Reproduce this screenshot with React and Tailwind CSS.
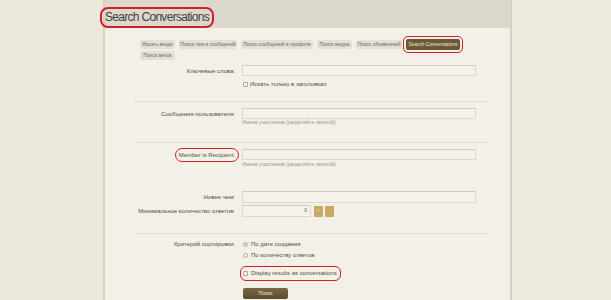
const tabs = [
  { label: "Искать везде", w: "w-[35px]" },
  { label: "Поиск тем и сообщений", w: "w-[58px]" },
  { label: "Поиск сообщений в профиле", w: "w-[72px]" },
  { label: "Поиск медиа", w: "w-[35px]" },
  { label: "Поиск объявлений", w: "w-[46px]" },
  { label: "Search Conversations", w: "w-[54px]", active: true },
  { label: "Поиск меток", w: "w-[35px]" },
];

function Label({ children }) {
  return (
    <div className="w-[130px] shrink-0 text-right text-[6px] leading-[8px] text-[#4d4d4d]">
      {children}
    </div>
  );
}

function Input({ className = "w-[234px] h-[11px]" }) {
  return (
    <div
      className={`${className} border border-[#dcd8cc] border-t-[#cfcbbf] bg-[#f4f2ea]`}
    />
  );
}

function Hint({ children }) {
  return (
    <div className="ml-[137px] text-[5px] leading-[7px] text-[#9a978e]">
      {children}
    </div>
  );
}

function Sep({ className }) {
  return <div className={`ml-[30px] w-[353px] h-px bg-[#e2ded2] ${className}`} />;
}

function Box({ round }) {
  return (
    <span
      className={`inline-block w-[5px] h-[5px] border border-[#a8a59c] bg-[#f8f7f2] ${
        round ? "rounded-full" : "rounded-[1px]"
      }`}
    />
  );
}

export default function App() {
  return (
    <div
      className="flex w-full h-[300px] overflow-hidden bg-[#ebe8dd]"
      style={{ fontFamily: '"Liberation Sans", Arial, sans-serif' }}
    >
      <div className="w-[103px] shrink-0" />

      <div className="w-[409px] shrink-0 flex flex-col border-x-2 border-[#d5d1c5]">
        <div className="h-[28px] shrink-0 bg-[#dcd8cc] flex items-end pb-[2px]">
          <span className="-ml-[3px] px-[3px] text-[12px] leading-[17px] tracking-[-0.7px] text-[#3f3f3f] rounded-[6px] outline-2 outline-[#d11f2b]">
            Search Conversations
          </span>
        </div>

        <div className="flex-1 bg-[#f3f1e7] rounded-tl-[4px] rounded-tr-[4px] flex flex-col">
          {/* tabs */}
          <div className="ml-[35px] mt-[11px] w-[330px] flex flex-wrap items-center gap-x-[4px] gap-y-[1px]">
            {tabs.map((t) =>
              t.active ? (
                <div
                  key={t.label}
                  className={`${t.w} h-[11px] flex items-center justify-center rounded-[2px] bg-[#6a5837] text-[5px] text-[#f1e8cf] outline-[1.5px] outline-offset-[2px] outline-[#d11f2b]`}
                >
                  {t.label}
                </div>
              ) : (
                <div
                  key={t.label}
                  className={`${t.w} h-[9px] flex items-center justify-center rounded-[2px] bg-[#e4e0d4] text-[5px] text-[#6a6a6a]`}
                >
                  {t.label}
                </div>
              )
            )}
          </div>

          {/* keywords */}
          <div className="mt-[5px] flex items-center">
            <Label>Ключевые слова:</Label>
            <div className="ml-[7px]">
              <Input />
            </div>
          </div>
          <div className="mt-[4px] ml-[138px] h-[8px] flex items-center gap-[2px] text-[6px] text-[#4d4d4d]">
            <Box />
            <span>Искать только в заголовках</span>
          </div>

          <Sep className="mt-[13px]" />

          {/* user messages */}
          <div className="mt-[6px] flex items-center">
            <Label>Сообщения пользователя:</Label>
            <div className="ml-[7px]">
              <Input />
            </div>
          </div>
          <Hint>Имена участников (разделяйте запятой).</Hint>

          <Sep className="mt-[16px]" />

          {/* recipient */}
          <div className="mt-[6px] flex items-center">
            <Label>
              <span className="rounded-[3px] outline-[1.5px] outline-offset-[3px] outline-[#d11f2b]">
                Member is Recipient:
              </span>
            </Label>
            <div className="ml-[7px]">
              <Input />
            </div>
          </div>
          <Hint>
            <span className="block mt-px">Имена участников (разделяйте запятой).</span>
          </Hint>

          {/* newer than */}
          <div className="mt-[23px] flex items-center">
            <Label>Новее чем:</Label>
            <div className="ml-[7px]">
              <Input className="w-[234px] h-[12px]" />
            </div>
          </div>

          {/* min replies */}
          <div className="mt-[2px] flex items-center">
            <Label>Минимальное количество ответов:</Label>
            <div className="ml-[7px] flex items-center">
              <div className="w-[69px] h-[12px] border border-[#dcd8cc] border-t-[#cfcbbf] bg-[#f4f2ea] flex items-center justify-end pr-[3px] text-[5px] text-[#555]">
                0
              </div>
              <div className="ml-[3px] w-[9px] h-[11px] rounded-[1px] bg-[#c9a961] flex items-center justify-center text-[5px] text-[#f3e7c4]">
                +
              </div>
              <div className="ml-[2px] w-[9px] h-[11px] rounded-[1px] bg-[#c9a961] flex items-center justify-center text-[5px] text-[#f3e7c4]">
                -
              </div>
            </div>
          </div>

          <Sep className="mt-[16px]" />

          {/* sort */}
          <div className="mt-[6px] flex items-start">
            <Label>Критерий сортировки:</Label>
            <div className="ml-[8px] flex flex-col text-[6px] text-[#4d4d4d]">
              <div className="h-[8px] flex items-center gap-[3px]">
                <span className="relative inline-block w-[5px] h-[5px] rounded-full border border-[#a8a59c] bg-[#f8f7f2]">
                  <span className="absolute left-[1px] top-[1px] w-[1px] h-[1px] rounded-full bg-[#444]" />
                </span>
                <span>По дате создания</span>
              </div>
              <div className="mt-[3px] h-[8px] flex items-center gap-[3px]">
                <Box round />
                <span>По количеству ответов</span>
              </div>
              <div className="mt-[10px] h-[8px] flex items-center">
                <span className="flex items-center gap-[3px] rounded-[3px] outline-[1.5px] outline-offset-[2px] outline-[#d11f2b] pr-[1px]">
                  <Box />
                  <span>Display results as conversations</span>
                </span>
              </div>
              <div className="mt-[11px] w-[45px] h-[11px] rounded-[2px] bg-gradient-to-b from-[#7a6745] to-[#5c4b2e] flex items-center justify-center text-[5px] text-[#f3ead2]">
                Поиск
              </div>
            </div>
          </div>
        </div>
      </div>

      <div className="flex-1 bg-[#eceadf]" />
    </div>
  );
}
